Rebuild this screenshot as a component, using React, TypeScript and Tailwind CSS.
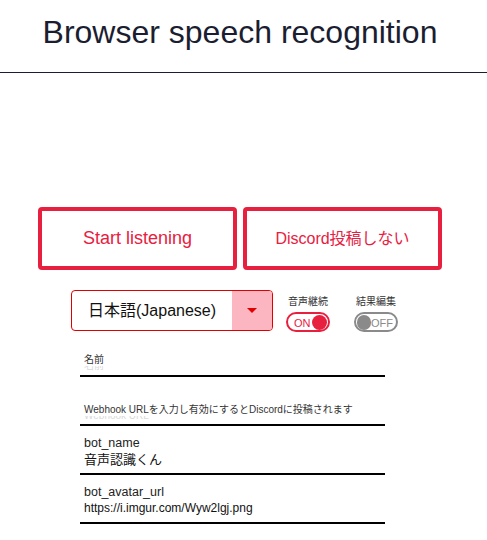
import React from 'react';

const font = { fontFamily: '"Liberation Sans", "Noto Sans CJK JP", sans-serif' };

function Toggle({ label, on }: { label: string; on: boolean }) {
  return (
    <div className="flex flex-col items-center w-[44px]">
      <span className="text-[10px] leading-[12px] text-[#333] whitespace-nowrap mt-[6px]">{label}</span>
      <div
        className={
          on
            ? 'mt-[4px] w-[44px] h-[20px] rounded-full border-2 border-[#e8203f] bg-white flex items-center justify-between pl-[6px] pr-[1px]'
            : 'mt-[4px] w-[44px] h-[20px] rounded-full border-2 border-[#8a8a8a] bg-white flex items-center justify-between pl-[1px] pr-[3px]'
        }
      >
        {on ? (
          <>
            <span className="text-[11px] leading-none text-[#e8203f] mt-[2px]">ON</span>
            <span className="w-[15px] h-[15px] rounded-full bg-[#e8203f]" />
          </>
        ) : (
          <>
            <span className="w-[15px] h-[15px] rounded-full bg-[#8a8a8a]" />
            <span className="text-[11px] leading-none text-[#8a8a8a] mt-[2px]">OFF</span>
          </>
        )}
      </div>
    </div>
  );
}

export default function App() {
  return (
    <div className="min-h-screen bg-white text-[#1b1e30]" style={font}>
      {/* Header */}
      <header className="h-[73px] border-b border-[#1b1e30]">
        <h1 className="w-[480px] text-center text-[32px] leading-[36px] pt-[14px] text-[#1b1e30]">
          Browser speech recognition
        </h1>
      </header>

      {/* Buttons */}
      <div className="flex gap-[6px] ml-[38px] mt-[134px]">
        <button className="w-[199px] h-[63px] border-4 border-[#e8203f] rounded-[4px] text-[#e8203f] text-[18px]">
          Start listening
        </button>
        <button className="w-[199px] h-[63px] border-4 border-[#e8203f] rounded-[4px] text-[#e8203f] text-[16px]">
          Discord投稿しない
        </button>
      </div>

      {/* Select + toggles */}
      <div className="flex items-start h-[41px] ml-[71px] mt-[20px]">
        <div className="w-[202px] h-[41px] border border-[#e00000] rounded-[4px] flex overflow-hidden">
          <div className="flex-1 flex items-center pl-[16px] text-[16px] text-[#111]">日本語(Japanese)</div>
          <div className="w-[40px] bg-[#fbb6c1] flex items-center justify-center">
            <svg width="10" height="5" viewBox="0 0 10 5">
              <path d="M0 0 L10 0 L5 5 Z" fill="#e00000" />
            </svg>
          </div>
        </div>
        <div className="ml-[13px]">
          <Toggle label="音声継続" on={true} />
        </div>
        <div className="ml-[24px]">
          <Toggle label="結果編集" on={false} />
        </div>
      </div>

      {/* Fields */}
      <div className="ml-[80px] w-[305px]">
        <div className="relative h-[46px] border-b-2 border-black flex flex-col justify-end pb-[7px]">
          <span className="absolute left-[4px] bottom-[3px] text-[10px] leading-[12px] text-[#dadada]">名前</span>
          <span className="relative bg-white self-start pl-[4px] pr-[2px] text-[10px] leading-[12px] text-[#333] mb-[2px]">名前</span>
        </div>
        <div className="relative h-[49px] border-b-2 border-black flex flex-col justify-end pb-[6px]">
          <span className="absolute left-[4px] bottom-[2px] text-[10px] leading-[12px] text-[#dadada]">Webhook URL</span>
          <span className="relative bg-white self-start pl-[4px] pr-[2px] text-[10px] leading-[12px] text-[#333] mb-[2px]">
            Webhook URLを入力し有効にするとDiscordに投稿されます
          </span>
        </div>
        <div className="h-[49px] border-b-2 border-black flex flex-col justify-end pb-[4px] pl-[4px]">
          <span className="text-[12.5px] leading-[16px] text-[#222]">bot_name</span>
          <span className="text-[13px] leading-[18px] text-[#111]">音声認識くん</span>
        </div>
        <div className="h-[49px] border-b-2 border-black flex flex-col justify-end pb-[5px] pl-[4px]">
          <span className="text-[12.5px] leading-[16px] text-[#222]">bot_avatar_url</span>
          <span className="text-[12px] leading-[17px] text-[#111]">https://i.imgur.com/Wyw2lgj.png</span>
        </div>
      </div>
    </div>
  );
}
